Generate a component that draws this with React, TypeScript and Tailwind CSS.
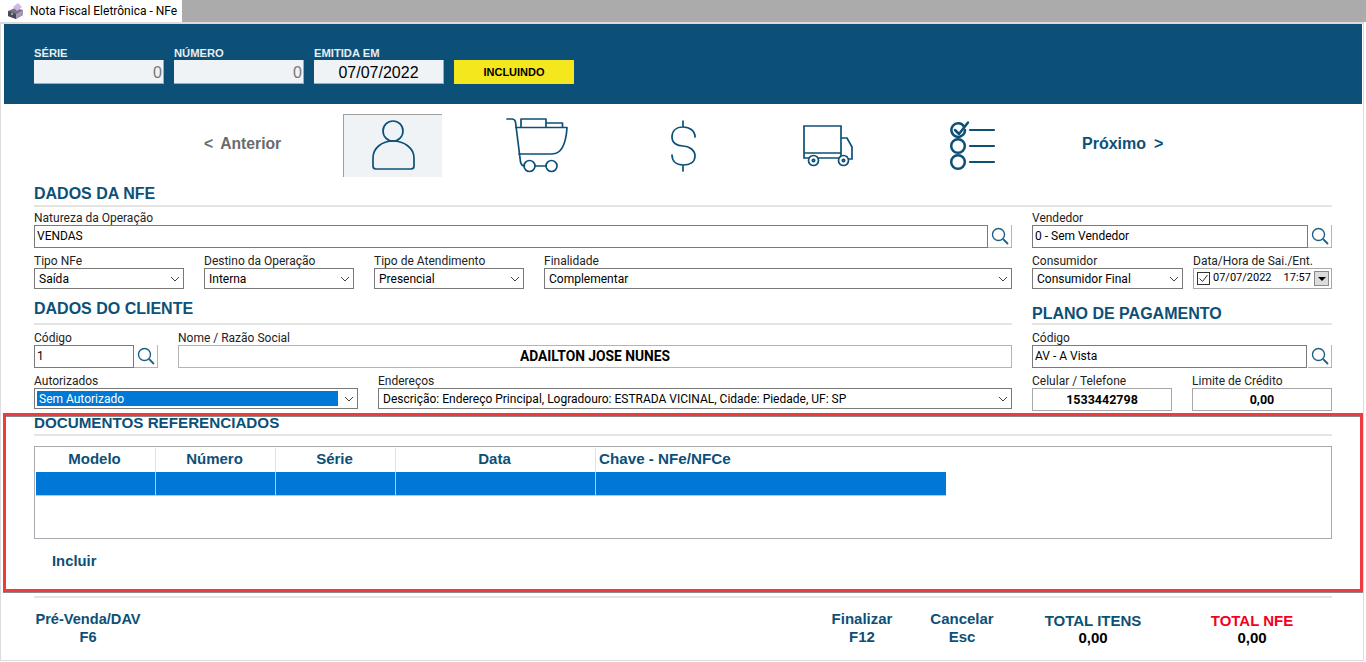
import React from "react";

const Lupa = () => (
  <svg width="20" height="20" viewBox="0 0 20 20" fill="none" stroke="#1f6288" strokeWidth="1.4">
    <circle cx="8.5" cy="8.5" r="6" />
    <path d="M13 13l5 5" strokeWidth="1.8" />
  </svg>
);

const Chevron = () => (
  <svg width="10" height="6" viewBox="0 0 10 6" fill="none" stroke="#444" strokeWidth="1">
    <path d="M1 1l4 4 4-4" />
  </svg>
);

const Label = ({ children }: { children: React.ReactNode }) => (
  <div className="h-[16px] text-[12px] leading-[19px] text-[#222] whitespace-nowrap">{children}</div>
);

const SearchBtn = () => (
  <div className="w-[24px] h-[23px] shrink-0 flex items-center justify-center border-r border-b border-[#b4b4b4]">
    <Lupa />
  </div>
);

const TextBox = ({ children, className = "" }: { children?: React.ReactNode; className?: string }) => (
  <div className={`h-[23px] border border-[#7a7a7a] px-[2px] text-[12px] leading-[20px] text-black whitespace-nowrap ${className}`}>
    {children}
  </div>
);

const Select = ({ value, selected = false }: { value: string; selected?: boolean }) => (
  <div className="h-[21px] border border-[#7a7a7a] flex items-center pl-[2px] pr-[3px] text-[12px] text-black">
    <div className={`flex-1 h-[15px] min-w-0 px-[2px] leading-[17px] whitespace-nowrap overflow-hidden ${selected ? "bg-[#0078d7] text-white" : ""}`}>
      {value}
    </div>
    <div className="w-[16px] flex justify-end shrink-0">
      <Chevron />
    </div>
  </div>
);

const Heading = ({ children, className = "" }: { children: React.ReactNode; className?: string }) => (
  <div className={`font-['Liberation_Sans',sans-serif] font-bold text-[#0d5077] whitespace-nowrap ${className}`}>{children}</div>
);

const Rule = () => <div className="h-[2px] bg-[#e4e4e4]" />;

const TopField = ({ label, value, dark = false }: { label: string; value: string; dark?: boolean }) => (
  <div className="w-[130px]">
    <div className="h-[16px] text-[11.200px] leading-[18px] font-bold text-[#e8eef2] font-['Liberation_Sans',sans-serif] whitespace-nowrap">{label}</div>
    <div
      className={`h-[24px] bg-[#f0f3f6] border-r border-b border-[#a8a8a8] text-[16px] leading-[25px] font-['Liberation_Sans',sans-serif] ${
        dark ? "text-center text-black" : "text-right pr-px text-[#777]"
      }`}
    >
      {value}
    </div>
  </div>
);

const NavIcon = ({ x, active = false, children }: { x: number; active?: boolean; children: React.ReactNode }) => (
  <div className={`w-[99px] h-[63px] shrink-0 ${active ? "bg-[#f0f3f6] border-l border-t border-[#a0a0a0]" : ""}`}>
    <svg
      width={active ? 98 : 99}
      height={active ? 62 : 63}
      viewBox={active ? `${x + 1} 115 98 62` : `${x} 114 99 63`}
      fill="none"
      stroke="#0d5077"
      strokeWidth="1.700"
      strokeLinecap="round"
      strokeLinejoin="round"
    >
      {children}
    </svg>
  </div>
);

const Col = ({ w, title }: { w: string; title: string }) => (
  <div className={`${w} shrink-0`}>
    <div className="h-[25px] pt-px">
      <div className="h-[24px] pr-[2px] border-r border-[#e2e2e2] text-[15px] leading-[22px] font-bold text-[#0d5077] font-['Liberation_Sans',sans-serif]">
        {title}
      </div>
    </div>
    <div className="h-[24px] bg-[#0078d7] border-r border-b border-[#b9c9d8]" />
  </div>
);

const FootBtn = ({ a, b, className = "" }: { a: string; b: string; className?: string }) => (
  <div className={`text-center leading-[18px] font-bold text-[#0d5077] font-['Liberation_Sans',sans-serif] ${className}`}>
    <div>{a}</div>
    <div>{b}</div>
  </div>
);

export default function App() {
  return (
    <div className="relative w-[1366px] h-[662px] overflow-hidden bg-white font-['Roboto',sans-serif]">
      <div className="h-[22px] bg-[#ababab] flex">
        <div className="w-[182px] h-[22px] bg-white flex items-center pl-[8px] gap-[6px] text-[12px] text-black whitespace-nowrap">
          <svg width="16" height="16" viewBox="0 0 16 16">
            <path d="M0 8l7-3 8 2v5l-7 4-8-3z" fill="#7b7088" />
            <path d="M0 8l8 3v5l-8-3z" fill="#4e4660" />
            <path d="M5 4l5-4 4 4-5 4z" fill="#cdb8e6" />
            <path d="M8 11l7-4v5l-7 4z" fill="#a597b5" />
            <rect x="3" y="10" width="2" height="2" fill="#63c878" />
          </svg>
          <span>Nota Fiscal Eletrônica - NFe</span>
        </div>
      </div>

      <div className="w-[1364px] h-[639px] border-l border-r border-b border-t-2 border-[#dcdcdc]">
        <div className="ml-[3px] w-[1358px] h-[80px] bg-[#0d5077] pt-[20px] pl-[30px] flex gap-[10px]">
          <TopField label="SÉRIE" value="0" />
          <TopField label="NÚMERO" value="0" />
          <TopField label="EMITIDA EM" value="07/07/2022" dark />
          <div className="mt-[16px] w-[120px] h-[24px] bg-[#f5e71d] text-center text-[11px] leading-[24px] font-bold text-black font-['Liberation_Sans',sans-serif]">
            INCLUINDO
          </div>
        </div>

        <div className="mt-[10px] h-[63px] flex items-center pl-[203px] font-['Liberation_Sans',sans-serif] font-bold text-[16px]">
          <div className="w-[139px] pb-[4px] text-[15.700px] text-[#6b6b6b] whitespace-nowrap">&lt;<span className="ml-[7px]">Anterior</span></div>
          <div className="flex gap-[46px]">
            <NavIcon x={343} active>
              <circle cx="393" cy="131" r="10" />
              <path d="M373 158c0-10 9-17 20-17s21 7 21 17v8c0 2-1 3-3 3h-35c-2 0-3-1-3-3z" />
            </NavIcon>
            <NavIcon x={488}>
              <path d="M507 119h5c2 0 3 1 3.500 3l5 40c.5 2 2 4 4 4" />
              <path d="M516 127.500h51c-1 16-5 26.500-15 26.500h-33" />
              <path d="M521 127v-8h25v8M546 123h16.500v4" />
              <circle cx="529.500" cy="166" r="5.500" />
              <circle cx="551.500" cy="166" r="5.500" />
              <path d="M535 166h11" />
            </NavIcon>
            <NavIcon x={633}>
              <path d="M695 137c0-6-5-10-12-10s-11 4-11 10 5 9 11 9 12 4 12 10-5 9-12 9-11-4-11-10M683 121v6M683 165v6" />
            </NavIcon>
            <NavIcon x={778}>
              <path d="M804 158v-32h37v32zM804 153h37M841 138h6l5 9v12h-3" strokeLinecap="butt" strokeLinejoin="miter" />
              <circle cx="813.500" cy="160.500" r="5" fill="#fff" />
              <circle cx="813.500" cy="160.500" r="1.200" />
              <circle cx="843.500" cy="160.500" r="5" fill="#fff" />
              <circle cx="843.500" cy="160.500" r="1.200" />
            </NavIcon>
            <NavIcon x={923}>
              <path d="M964 126.500a6.800 6.800 0 1 0 1 3.500" strokeWidth="2.500" />
              <path d="M955 130l4 4 9-11.500" strokeWidth="2.500" />
              <circle cx="958" cy="146" r="6.800" strokeWidth="2.500" />
              <circle cx="958" cy="162" r="6.800" strokeWidth="2.500" />
              <path d="M970 130h24M970 146h24M970 162h24" strokeWidth="2.200" />
            </NavIcon>
          </div>
          <div className="ml-[60px] pb-[4px] text-[#0d5077] whitespace-nowrap">Próximo<span className="ml-[8px]">&gt;</span></div>
        </div>

        <div className="pl-[33px] pr-[31px]">
          <Heading className="mt-[7px] h-[21px] text-[16px] leading-[20px]">DADOS DA NFE</Heading>
          <Rule />
          <div className="mt-[2px] flex gap-[20px]">
            <div className="w-[978px] shrink-0">
              <Label>Natureza da Operação</Label>
              <div className="flex">
                <TextBox className="flex-1">VENDAS</TextBox>
                <SearchBtn />
              </div>
              <div className="mt-[4px] flex gap-[20px]">
                <div className="w-[150px]"><Label>Tipo NFe</Label><Select value="Saída" /></div>
                <div className="w-[150px]"><Label>Destino da Operação</Label><Select value="Interna" /></div>
                <div className="w-[150px]"><Label>Tipo de Atendimento</Label><Select value="Presencial" /></div>
                <div className="flex-1"><Label>Finalidade</Label><Select value="Complementar" /></div>
              </div>
              <Heading className="mt-[10px] h-[24px] text-[16px] leading-[20px]">DADOS DO CLIENTE</Heading>
              <Rule />
              <div className="mt-[4px] flex">
                <div className="w-[124px]">
                  <Label>Código</Label>
                  <div className="flex">
                    <TextBox className="flex-1">1</TextBox>
                    <SearchBtn />
                  </div>
                </div>
                <div className="ml-[20px] flex-1">
                  <Label>Nome / Razão Social</Label>
                  <div className="h-[23px] border border-[#b4b4b4] text-center text-[13.800px] leading-[21px] font-bold text-black">
                    ADAILTON JOSE NUNES
                  </div>
                </div>
              </div>
              <div className="mt-[4px] flex">
                <div className="w-[324px]"><Label>Autorizados</Label><Select value="Sem Autorizado" selected /></div>
                <div className="ml-[20px] flex-1">
                  <Label>Endereços</Label>
                  <Select value="Descrição: Endereço Principal, Logradouro: ESTRADA VICINAL, Cidade: Piedade, UF: SP" />
                </div>
              </div>
            </div>

            <div className="w-[300px] shrink-0">
              <Label>Vendedor</Label>
              <div className="flex">
                <TextBox className="flex-1">0 - Sem Vendedor</TextBox>
                <SearchBtn />
              </div>
              <div className="mt-[4px] flex gap-[10px]">
                <div className="w-[151px] shrink-0"><Label>Consumidor</Label><Select value="Consumidor Final" /></div>
                <div className="w-[139px] shrink-0">
                  <Label>Data/Hora de Sai./Ent.</Label>
                  <div className="h-[21px] border border-[#a8a8a8] flex items-center pl-[3px] pr-[2px] text-[11px] text-black whitespace-nowrap">
                    <div className="w-[13px] h-[13px] border border-[#333] flex items-center justify-center shrink-0">
                      <svg width="11" height="11" viewBox="0 0 11 11" fill="none" stroke="#333" strokeWidth="1"><path d="M1.500 5.500l3 3 5-6.500" /></svg>
                    </div>
                    <span className="ml-[3px]">07/07/2022</span>
                    <span className="ml-[12px]">17:57</span>
                    <div className="ml-auto w-[15px] h-[15px] bg-[#dcdcdc] border border-[#8a8a8a] flex items-center justify-center">
                      <div className="w-0 h-0 border-l-[4px] border-r-[4px] border-t-[4px] border-l-transparent border-r-transparent border-t-black" />
                    </div>
                  </div>
                </div>
              </div>
              <Heading className="mt-[15px] h-[19px] text-[16px] leading-[20px]">PLANO DE PAGAMENTO</Heading>
              <Rule />
              <div className="mt-[4px]">
                <Label>Código</Label>
                <div className="flex">
                  <TextBox className="flex-1 mr-px">AV - A Vista</TextBox>
                  <SearchBtn />
                </div>
              </div>
              <div className="mt-[4px] flex gap-[20px]">
                <div className="w-[140px]">
                  <Label>Celular / Telefone</Label>
                  <div className="h-[23px] border border-[#a8a8a8] text-center text-[12.500px] leading-[21px] font-bold text-black">1533442798</div>
                </div>
                <div className="w-[140px]">
                  <Label>Limite de Crédito</Label>
                  <div className="h-[23px] border border-[#a8a8a8] text-center text-[12.500px] leading-[21px] font-bold text-black">0,00</div>
                </div>
              </div>
            </div>
          </div>
        </div>

        <section className="mt-[2px] ml-[2px] w-[1360px] h-[179px] border-[3px] border-[#f03a3e] shadow-[0_1px_0_#8a8a8a,inset_0_1px_0_#8a8a8a] pl-[28px] pr-[28px]">
          <Heading className="h-[18px] text-[15.200px] leading-[13px]">DOCUMENTOS REFERENCIADOS</Heading>
          <Rule />
          <div className="mt-[10px] h-[93px] border border-[#a9a9b0] pl-px flex">
            <div className="flex text-center">
              <Col w="w-[120px]" title="Modelo" />
              <Col w="w-[120px]" title="Número" />
              <Col w="w-[120px]" title="Série" />
              <Col w="w-[200px]" title="Data" />
              <div className="w-[350px] shrink-0">
                <div className="h-[25px] pl-[3px] text-left text-[15.200px] leading-[23px] font-bold text-[#0d5077] font-['Liberation_Sans',sans-serif]">Chave - NFe/NFCe</div>
                <div className="h-[24px] bg-[#0078d7] border-b border-[#b9c9d8]" />
              </div>
            </div>
          </div>
          <div className="mt-[13px] ml-[18px] text-[14.800px] leading-[18px] font-bold text-[#0d5077] font-['Liberation_Sans',sans-serif]">Incluir</div>
        </section>

        <div className="mt-[4px] ml-[33px] w-[1298px] h-[2px] bg-[#e4e4e4]" />

        <div className="flex items-start pl-[32px] pt-[12px]">
          <FootBtn className="w-[110px] text-[14.600px]" a="Pré-Venda/DAV" b="F6" />
          <FootBtn className="ml-[679px] w-[80px] text-[15px]" a="Finalizar" b="F12" />
          <FootBtn className="ml-[20px] w-[80px] text-[15px]" a="Cancelar" b="Esc" />
          <div className="ml-[31px] w-[120px] mt-[2px] text-center text-[15px] leading-[17px] font-bold font-['Liberation_Sans',sans-serif]">
            <div className="text-[#0d5077]">TOTAL ITENS</div>
            <div className="text-black">0,00</div>
          </div>
          <div className="ml-[39px] w-[120px] mt-[2px] text-center text-[15px] leading-[17px] font-bold font-['Liberation_Sans',sans-serif]">
            <div className="text-[#f5001e]">TOTAL NFE</div>
            <div className="text-black">0,00</div>
          </div>
        </div>
      </div>
    </div>
  );
}
